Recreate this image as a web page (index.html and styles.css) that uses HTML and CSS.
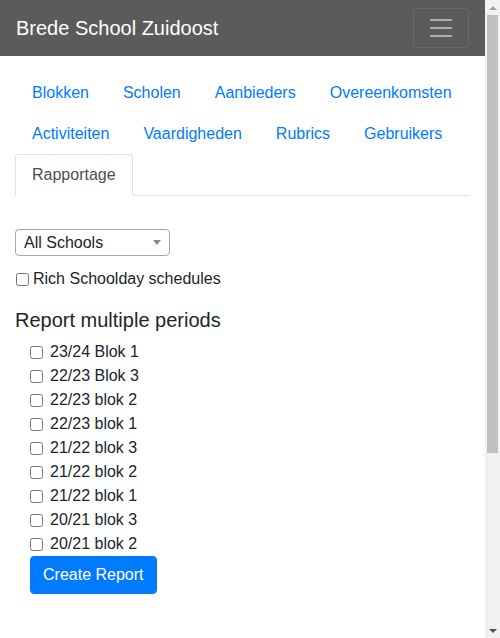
FILE: index.html
```html
<!DOCTYPE html>
<html lang="nl">
<head>
<meta charset="utf-8">
<title>Brede School Zuidoost</title>
<link rel="stylesheet" href="styles.css">
</head>
<body>
<div class="page">
<nav class="navbar">
  <a class="brand" href="#">Brede School Zuidoost</a>
  <button class="toggler" type="button" aria-label="Menu">
    <svg width="30" height="30" viewBox="0 0 30 30"><path d="M4 7h22M4 15h22M4 23h22" stroke="rgba(255,255,255,0.5)" stroke-width="2"/></svg>
  </button>
</nav>
<main class="content">
  <ul class="tabs">
    <li><a class="tab" href="#">Blokken</a></li>
    <li><a class="tab" href="#">Scholen</a></li>
    <li><a class="tab" href="#">Aanbieders</a></li>
    <li><a class="tab" href="#">Overeenkomsten</a></li>
    <li><a class="tab" href="#">Activiteiten</a></li>
    <li><a class="tab" href="#">Vaardigheden</a></li>
    <li><a class="tab" href="#">Rubrics</a></li>
    <li><a class="tab" href="#">Gebruikers</a></li>
    <li><a class="tab active" href="#">Rapportage</a></li>
  </ul>

  <div class="select">
    <span>All Schools</span>
    <svg width="8" height="5" viewBox="0 0 8 5"><path d="M0 0h8L4 5z" fill="#888"/></svg>
  </div>

  <label class="check top-check"><input type="checkbox">Rich Schoolday schedules</label>

  <h5 class="heading">Report multiple periods</h5>
  <div class="periods">
    <label class="check"><input type="checkbox">23/24 Blok 1</label>
    <label class="check"><input type="checkbox">22/23 Blok 3</label>
    <label class="check"><input type="checkbox">22/23 blok 2</label>
    <label class="check"><input type="checkbox">22/23 blok 1</label>
    <label class="check"><input type="checkbox">21/22 blok 3</label>
    <label class="check"><input type="checkbox">21/22 blok 2</label>
    <label class="check"><input type="checkbox">21/22 blok 1</label>
    <label class="check"><input type="checkbox">20/21 blok 3</label>
    <label class="check"><input type="checkbox">20/21 blok 2</label>
    <button class="btn" type="button">Create Report</button>
  </div>
</main>
</div>
<div class="scrollbar" aria-hidden="true">
  <div class="sb-btn"><svg width="8" height="4" viewBox="0 0 8 4"><path d="M0 4h8L4 0z" fill="#a3a3a3"/></svg></div>
  <div class="sb-track"><div class="sb-thumb"></div></div>
  <div class="sb-btn"><svg width="8" height="4" viewBox="0 0 8 4"><path d="M0 0h8L4 4z" fill="#505050"/></svg></div>
</div>
</body>
</html>
```
FILE: styles.css
```css
html, body {
  margin: 0;
  padding: 0;
}
body {
  font-family: "Liberation Sans", Arial, sans-serif;
  font-size: 16px;
  line-height: 24px;
  color: #212529;
  background: #fff;
}
.page {
  margin-right: 15px;
}
.navbar {
  height: 56px;
  box-sizing: border-box;
  background: #5b5b5b;
  padding: 8px 16px;
  display: flex;
  align-items: center;
  justify-content: space-between;
}
.brand {
  color: #fff;
  font-size: 20px;
  line-height: 30px;
  text-decoration: none;
}
.toggler {
  width: 56px;
  height: 40px;
  box-sizing: border-box;
  padding: 4px 12px;
  border: 1px solid rgba(255,255,255,0.1);
  border-radius: 4px;
  background: transparent;
  display: flex;
  align-items: center;
  justify-content: center;
}
.toggler svg { display: block; }
.content {
  padding: 16px 15px 292px;
}
.tabs {
  list-style: none;
  margin: 0;
  padding: 0;
  display: flex;
  flex-wrap: wrap;
  border-bottom: 1px solid #dee2e6;
}
.tabs li {
  margin-bottom: -1px;
}
.tab {
  display: block;
  padding: 8px 16px;
  border: 1px solid transparent;
  border-radius: 4px 4px 0 0;
  color: #007bff;
  text-decoration: none;
}
.tab.active {
  color: #495057;
  background: #fff;
  border-color: #dee2e6 #dee2e6 #fff;
}
.select {
  margin-top: 33px;
  width: 155px;
  height: 27px;
  box-sizing: border-box;
  border: 1px solid #a6a6a6;
  border-radius: 4px;
  padding: 0 8px;
  display: flex;
  align-items: center;
  justify-content: space-between;
  color: #212529;
}
.select svg { display: block; }
.check {
  display: flex;
  align-items: center;
  height: 24px;
}
.check input {
  width: 13px;
  height: 13px;
  margin: 0 4px 0 1px;
}
.top-check {
  margin-top: 11px;
}
.heading {
  font-size: 20px;
  font-weight: 400;
  line-height: 24px;
  margin: 17px 0 8px;
}
.periods {
  padding-left: 15px;
  display: flex;
  flex-direction: column;
  align-items: flex-start;
}
.periods .check input {
  margin: 0 7px 0 0;
}
.btn {
  font-family: inherit;
  font-size: 16px;
  line-height: 24px;
  padding: 6px 12px;
  border: 1px solid #007bff;
  border-radius: 4px;
  background: #007bff;
  color: #fff;
}
.scrollbar {
  position: fixed;
  top: 0;
  right: 0;
  width: 15px;
  height: 100%;
  background: #f1f1f1;
  display: flex;
  flex-direction: column;
}
.sb-btn {
  height: 15px;
  display: flex;
  align-items: center;
  justify-content: center;
}
.sb-btn svg { display: block; }
.sb-track {
  flex: 1;
}
.sb-thumb {
  height: 438px;
  margin: 0 2px;
  background: #c1c1c1;
}
```
